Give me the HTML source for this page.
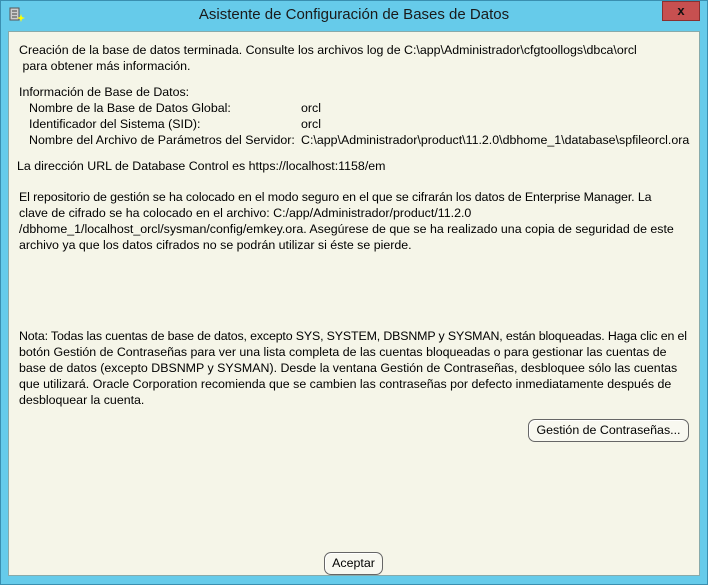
<html><head><style>
body{margin:0;width:708px;height:585px;background:#66cbea;position:relative;overflow:hidden;font-family:"Liberation Sans",sans-serif;}
.win{position:absolute;left:0;top:0;width:706px;height:583px;border:1px solid #3a8fb0;background:#66cbea;}
.title{position:absolute;left:0;top:6px;width:708px;text-align:center;font-size:15px;color:#1a1a1a;}
.close{position:absolute;left:662px;top:1px;width:38px;height:20px;background:#c75050;border:1px solid #8a3030;box-sizing:border-box;color:#111;font-weight:bold;font-size:13px;text-align:center;line-height:18px;}
.content{position:absolute;left:8px;top:31px;width:692px;height:545px;background:#f5f5e8;border:1px solid #8aa;box-sizing:border-box;}
.t{position:absolute;font-size:12.4px;color:#000;white-space:nowrap;line-height:14px;}
.btn{position:absolute;border:1px solid #666;border-radius:7px;background:#f8f8f0;font-size:12.4px;text-align:center;box-sizing:border-box;line-height:21px;box-shadow:inset 1px 1px 0 #fff;}
</style></head><body>
<div class="win"></div>
<svg style="position:absolute;left:8px;top:6px" width="18" height="18"><rect x="2" y="2" width="9" height="12" fill="#ccc" stroke="#555"/><line x1="4" y1="5" x2="9" y2="5" stroke="#444"/><line x1="4" y1="8" x2="9" y2="8" stroke="#444"/><line x1="4" y1="11" x2="9" y2="11" stroke="#444"/><path d="M13 8 L14 11 L17 12 L14 13 L13 16 L12 13 L9 12 L12 11Z" fill="#ff0"/></svg>
<div class="title">Asistente de Configuración de Bases de Datos</div>
<div class="close">x</div>
<div class="content"></div>
<div class="t" style="left:19px;top:43px">Creación de la base de datos terminada. Consulte los archivos log de C:\app\Administrador\cfgtoollogs\dbca\orcl</div>
<div class="t" style="left:19px;top:59px">&nbsp;para obtener más información.</div>
<div class="t" style="left:19px;top:85px">Información de Base de Datos:</div>
<div class="t" style="left:29px;top:101px">Nombre de la Base de Datos Global:</div>
<div class="t" style="left:301px;top:101px">orcl</div>
<div class="t" style="left:29px;top:117px">Identificador del Sistema (SID):</div>
<div class="t" style="left:301px;top:117px">orcl</div>
<div class="t" style="left:29px;top:133px">Nombre del Archivo de Parámetros del Servidor:</div>
<div class="t" style="left:301px;top:133px">C:\app\Administrador\product\11.2.0\dbhome_1\database\spfileorcl.ora</div>
<div class="t" style="left:17px;top:159px">La dirección URL de Database Control es https://localhost:1158/em</div>
<div class="t" style="left:19px;top:190px;letter-spacing:-0.1px">El repositorio de gestión se ha colocado en el modo seguro en el que se cifrarán los datos de Enterprise Manager. La</div>
<div class="t" style="left:19px;top:206px">clave de cifrado se ha colocado en el archivo: C:/app/Administrador/product/11.2.0</div>
<div class="t" style="left:19px;top:222px">/dbhome_1/localhost_orcl/sysman/config/emkey.ora. Asegúrese de que se ha realizado una copia de seguridad de este</div>
<div class="t" style="left:19px;top:238px">archivo ya que los datos cifrados no se podrán utilizar si éste se pierde.</div>
<div class="t" style="left:19px;top:329px;letter-spacing:-0.15px">Nota: Todas las cuentas de base de datos, excepto SYS, SYSTEM, DBSNMP y SYSMAN, están bloqueadas. Haga clic en el</div>
<div class="t" style="left:19px;top:345px">botón Gestión de Contraseñas para ver una lista completa de las cuentas bloqueadas o para gestionar las cuentas de</div>
<div class="t" style="left:19px;top:361px">base de datos (excepto DBSNMP y SYSMAN). Desde la ventana Gestión de Contraseñas, desbloquee sólo las cuentas</div>
<div class="t" style="left:19px;top:377px">que utilizará. Oracle Corporation recomienda que se cambien las contraseñas por defecto inmediatamente después de</div>
<div class="t" style="left:19px;top:393px">desbloquear la cuenta.</div>
<div class="btn" style="left:528px;top:419px;width:161px;height:23px">Gestión de Contraseñas...</div>
<div class="btn" style="left:324px;top:552px;width:59px;height:23px">Aceptar</div>
</body></html>
